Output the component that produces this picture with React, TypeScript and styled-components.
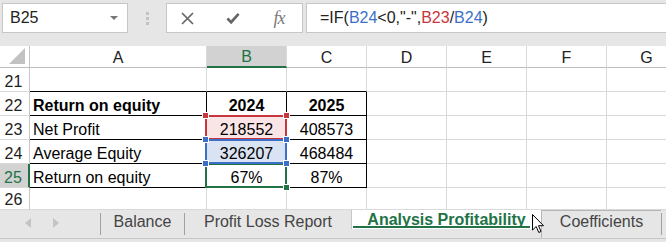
import React from 'react';
import styled, { createGlobalStyle, css } from 'styled-components';

const GREEN = '#217346';
const RED = '#c8363e';
const BLUE = '#3c70c8';
const GRID = '#d9d9d9';

const Global = createGlobalStyle`
  html, body { margin: 0; padding: 0; background: #fff; }
  body { font-family: "Liberation Sans", Arial, sans-serif; }
`;

const Page = styled.div`
  position: relative;
  width: 666px;
  height: 242px;
  overflow: hidden;
  display: flex;
  flex-direction: column;
  background: #e6e6e6;
  font-family: "Liberation Sans", Arial, sans-serif;
  font-size: 16px;
  color: #000;
`;

/* ---------- formula bar ---------- */
const Toolbar = styled.div`
  flex: none;
  height: 46px;
  box-sizing: border-box;
  padding: 3px 0 0 2px;
  display: flex;
  align-items: flex-start;
`;

const NameBox = styled.div`
  flex: none;
  width: 126px;
  height: 30px;
  box-sizing: border-box;
  background: #fff;
  border: 1px solid #c6c6c6;
  display: flex;
  align-items: center;
  justify-content: space-between;
  padding: 0 9px 0 7px;
  color: #222;
`;

const Caret = styled.span`
  width: 0;
  height: 0;
  border-left: 4px solid transparent;
  border-right: 4px solid transparent;
  border-top: 4px solid #777;
`;

const Grip = styled.div`
  flex: none;
  width: 38px;
  height: 30px;
  display: flex;
  flex-direction: column;
  align-items: center;
  justify-content: center;
  gap: 2px;
`;

const GripDot = styled.span`
  width: 3px;
  height: 3px;
  background: #c3c3c3;
`;

const FxBox = styled.div`
  flex: none;
  width: 137px;
  height: 30px;
  box-sizing: border-box;
  background: #fff;
  border: 1px solid #c6c6c6;
  display: flex;
  align-items: center;
  padding-left: 13px;
  gap: 32px;
`;

const IconSlot = styled.span`
  width: 14px;
  height: 14px;
  display: flex;
  align-items: center;
  justify-content: center;
`;

const Fx = styled.span`
  font-family: "Liberation Serif", "Times New Roman", serif;
  font-style: italic;
  font-size: 18px;
  color: #7a7a7a;
  letter-spacing: -1px;
  line-height: 14px;
`;

const FormulaInput = styled.div`
  flex: 1;
  margin-left: 3px;
  height: 30px;
  box-sizing: border-box;
  background: #fff;
  border: 1px solid #c6c6c6;
  border-right: none;
  display: flex;
  align-items: center;
  padding-left: 13px;
  color: #222;
  white-space: nowrap;
`;

const Ref = styled.span<{ $c: string }>`
  color: ${(p) => p.$c};
`;

/* ---------- sheet grid ---------- */
const Sheet = styled.div`
  flex: none;
  display: grid;
  grid-template-columns: 30px 177px repeat(6, 80px);
  grid-template-rows: 22px repeat(5, 24px) 22px;
  background: #fff;
`;

const Corner = styled.div`
  position: relative;
  box-sizing: border-box;
  border-right: 1px solid #c6c6c6;
  border-bottom: 1px solid #bdbdbd;
  background: #fff;
  &::after {
    content: '';
    position: absolute;
    right: 4px;
    bottom: 3px;
    width: 0;
    height: 0;
    border-left: 16px solid transparent;
    border-bottom: 16px solid #c2c2c2;
  }
`;

const ColHead = styled.div<{ $sel?: boolean }>`
  box-sizing: border-box;
  display: flex;
  align-items: center;
  justify-content: center;
  padding-top: 2px;
  background: ${(p) => (p.$sel ? '#d2d2d2' : '#fff')};
  color: ${(p) => (p.$sel ? GREEN : '#222')};
  border-right: 1px solid ${GRID};
  border-bottom: ${(p) => (p.$sel ? `2px solid ${GREEN}` : '1px solid #bdbdbd')};
`;

const RowHead = styled.div<{ $sel?: boolean }>`
  box-sizing: border-box;
  display: flex;
  align-items: flex-end;
  justify-content: center;
  padding: 0 2px 1px 0;
  line-height: 17px;
  background: ${(p) => (p.$sel ? '#d2d2d2' : '#fff')};
  color: ${(p) => (p.$sel ? GREEN : '#222')};
  border-bottom: 1px solid ${GRID};
  border-right: ${(p) => (p.$sel ? `2px solid ${GREEN}` : '1px solid #c6c6c6')};
`;

const Cell = styled.div<{
  $align?: 'left' | 'center';
  $bold?: boolean;
  $right?: boolean;
  $bottom?: boolean;
  $fill?: string;
}>`
  position: relative;
  box-sizing: border-box;
  display: flex;
  align-items: flex-end;
  justify-content: ${(p) => (p.$align === 'center' ? 'center' : 'flex-start')};
  padding: 0 3px 1px 3px;
  line-height: 17px;
  white-space: nowrap;
  font-weight: ${(p) => (p.$bold ? 700 : 400)};
  background: ${(p) => p.$fill ?? '#fff'};
  border-right: 1px solid ${(p) => (p.$right ? '#000' : GRID)};
  border-bottom: 1px solid ${(p) => (p.$bottom ? '#000' : GRID)};
`;

const Outline = styled.div<{ $c: string; $z: number }>`
  position: absolute;
  left: -2px;
  top: -1px;
  right: -1px;
  bottom: -1px;
  border: 2px solid ${(p) => p.$c};
  z-index: ${(p) => p.$z};
  pointer-events: none;
`;

const Handle = styled.span<{ $c: string; $x: 'l' | 'r'; $y: 't' | 'b' }>`
  position: absolute;
  width: 5px;
  height: 5px;
  background: ${(p) => p.$c};
  border: 1px solid #fff;
  ${(p) => (p.$x === 'l' ? css`left: -5px;` : css`right: -5px;`)}
  ${(p) => (p.$y === 't' ? css`top: -5px;` : css`bottom: -5px;`)}
`;

/* ---------- sheet tabs ---------- */
const TabBar = styled.div`
  flex: none;
  height: 28px;
  display: flex;
  align-items: flex-start;
  background: #e6e6e6;
  border-bottom: 1px solid #c6c6c6;
`;

const Nav = styled.div`
  align-self: stretch;
  width: 100px;
  display: flex;
  align-items: center;
  padding: 0 0 3px 25px;
  gap: 22px;
  box-sizing: border-box;
`;

const Arrow = styled.span<{ $dir: 'l' | 'r' }>`
  width: 0;
  height: 0;
  border-top: 5px solid transparent;
  border-bottom: 5px solid transparent;
  ${(p) =>
    p.$dir === 'l'
      ? css`border-right: 6px solid #c4c4c4;`
      : css`border-left: 6px solid #c4c4c4;`}
`;

const Sep = styled.span`
  align-self: center;
  width: 1px;
  height: 22px;
  background: #a0a0a0;
`;

const Tab = styled.div<{ $w: number; $active?: boolean; $outlined?: boolean }>`
  position: relative;
  width: ${(p) => p.$w}px;
  height: 28px;
  box-sizing: border-box;
  display: flex;
  align-items: flex-start;
  justify-content: center;
  padding-top: 4px;
  line-height: 16px;
  white-space: nowrap;
  color: #444;
  ${(p) =>
    p.$active &&
    css`
      height: 19px;
      padding-top: 2px;
      background: #fff;
      color: ${GREEN};
      font-weight: 700;
      border-left: 1px solid #c6c6c6;
      &::after {
        content: '';
        position: absolute;
        left: 1px;
        right: 11px;
        top: 16px;
        height: 2px;
        background: ${GREEN};
      }
    `}
  ${(p) =>
    p.$outlined &&
    css`
      border-top: 1px solid #b6b6b6;
      border-left: 1px solid #b6b6b6;
      padding-top: 3px;
    `}
`;

const Cursor = styled.svg`
  position: absolute;
  left: 532px;
  top: 214px;
  z-index: 5;
`;

type Row = {
  n: number;
  a: string;
  b: string;
  c: string;
  bold?: boolean;
};

const rows: Row[] = [
  { n: 21, a: '', b: '', c: '' },
  { n: 22, a: 'Return on equity', b: '2024', c: '2025', bold: true },
  { n: 23, a: 'Net Profit', b: '218552', c: '408573' },
  { n: 24, a: 'Average Equity', b: '326207', c: '468484' },
  { n: 25, a: 'Return on equity', b: '67%', c: '87%' },
  { n: 26, a: '', b: '', c: '' },
];

const cols = ['A', 'B', 'C', 'D', 'E', 'F', 'G'];

function BOverlay({ n }: { n: number }) {
  if (n === 23)
    return (
      <Outline $c={RED} $z={2}>
        <Handle $c={RED} $x="l" $y="t" />
        <Handle $c={RED} $x="r" $y="t" />
      </Outline>
    );
  if (n === 24)
    return (
      <Outline $c={BLUE} $z={3}>
        <Handle $c={BLUE} $x="l" $y="t" />
        <Handle $c={BLUE} $x="r" $y="t" />
        <Handle $c={BLUE} $x="l" $y="b" />
        <Handle $c={BLUE} $x="r" $y="b" />
      </Outline>
    );
  if (n === 25)
    return (
      <Outline $c={GREEN} $z={2}>
        <Handle $c={GREEN} $x="r" $y="b" />
      </Outline>
    );
  return null;
}

export default function App() {
  return (
    <>
      <Global />
      <Page>
        <Toolbar>
          <NameBox>
            <span>B25</span>
            <Caret />
          </NameBox>
          <Grip>
            <GripDot />
            <GripDot />
            <GripDot />
          </Grip>
          <FxBox>
            <IconSlot>
              <svg width="13" height="13" viewBox="0 0 13 13">
                <path d="M1 1 L12 12 M12 1 L1 12" stroke="#666" strokeWidth="1.7" fill="none" />
              </svg>
            </IconSlot>
            <IconSlot>
              <svg width="15" height="13" viewBox="0 0 15 13">
                <path d="M1.5 6.5 L5.5 10.5 L13.5 1.5" stroke="#666" strokeWidth="2.8" fill="none" />
              </svg>
            </IconSlot>
            <IconSlot>
              <Fx>fx</Fx>
            </IconSlot>
          </FxBox>
          <FormulaInput>
            =IF(<Ref $c={BLUE}>B24</Ref>&lt;0,"-",<Ref $c={RED}>B23</Ref>/<Ref $c={BLUE}>B24</Ref>)
          </FormulaInput>
        </Toolbar>

        <Sheet>
          <Corner />
          {cols.map((c) => (
            <ColHead key={c} $sel={c === 'B'}>
              {c}
            </ColHead>
          ))}
          {rows.map((r) => {
            const inTable = r.n >= 22 && r.n <= 25;
            const topEdge = r.n === 21;
            const bottom = inTable || topEdge;
            return (
              <React.Fragment key={r.n}>
                <RowHead $sel={r.n === 25}>{r.n}</RowHead>
                <Cell $bold={r.bold} $right={inTable} $bottom={bottom}>
                  {r.a}
                </Cell>
                <Cell
                  $align="center"
                  $bold={r.bold}
                  $right={inTable}
                  $bottom={bottom}
                  $fill={r.n === 23 ? '#f9e5e5' : r.n === 24 ? '#dae3f3' : undefined}
                >
                  {r.b}
                  <BOverlay n={r.n} />
                </Cell>
                <Cell $align="center" $bold={r.bold} $right={inTable} $bottom={bottom}>
                  {r.c}
                </Cell>
                <Cell />
                <Cell />
                <Cell />
                <Cell />
              </React.Fragment>
            );
          })}
        </Sheet>

        <TabBar>
          <Nav>
            <Arrow $dir="l" />
            <Arrow $dir="r" />
          </Nav>
          <Sep />
          <Tab $w={83}>Balance</Tab>
          <Sep />
          <Tab $w={166}>Profit Loss Report</Tab>
          <Tab $w={190} $active>
            Analysis Profitability
          </Tab>
          <Tab $w={120} $outlined>
            Coefficients
          </Tab>
          <Sep />
        </TabBar>

        <Cursor width="13" height="20" viewBox="0 0 13 20">
          <path
            d="M0.5 0.5 L0.5 16 L4.2 12.5 L6.8 18.5 L9 17.5 L6.5 11.7 L11.5 11.7 Z"
            fill="#fff"
            stroke="#000"
            strokeWidth="1"
            strokeLinejoin="round"
          />
        </Cursor>
      </Page>
    </>
  );
}
